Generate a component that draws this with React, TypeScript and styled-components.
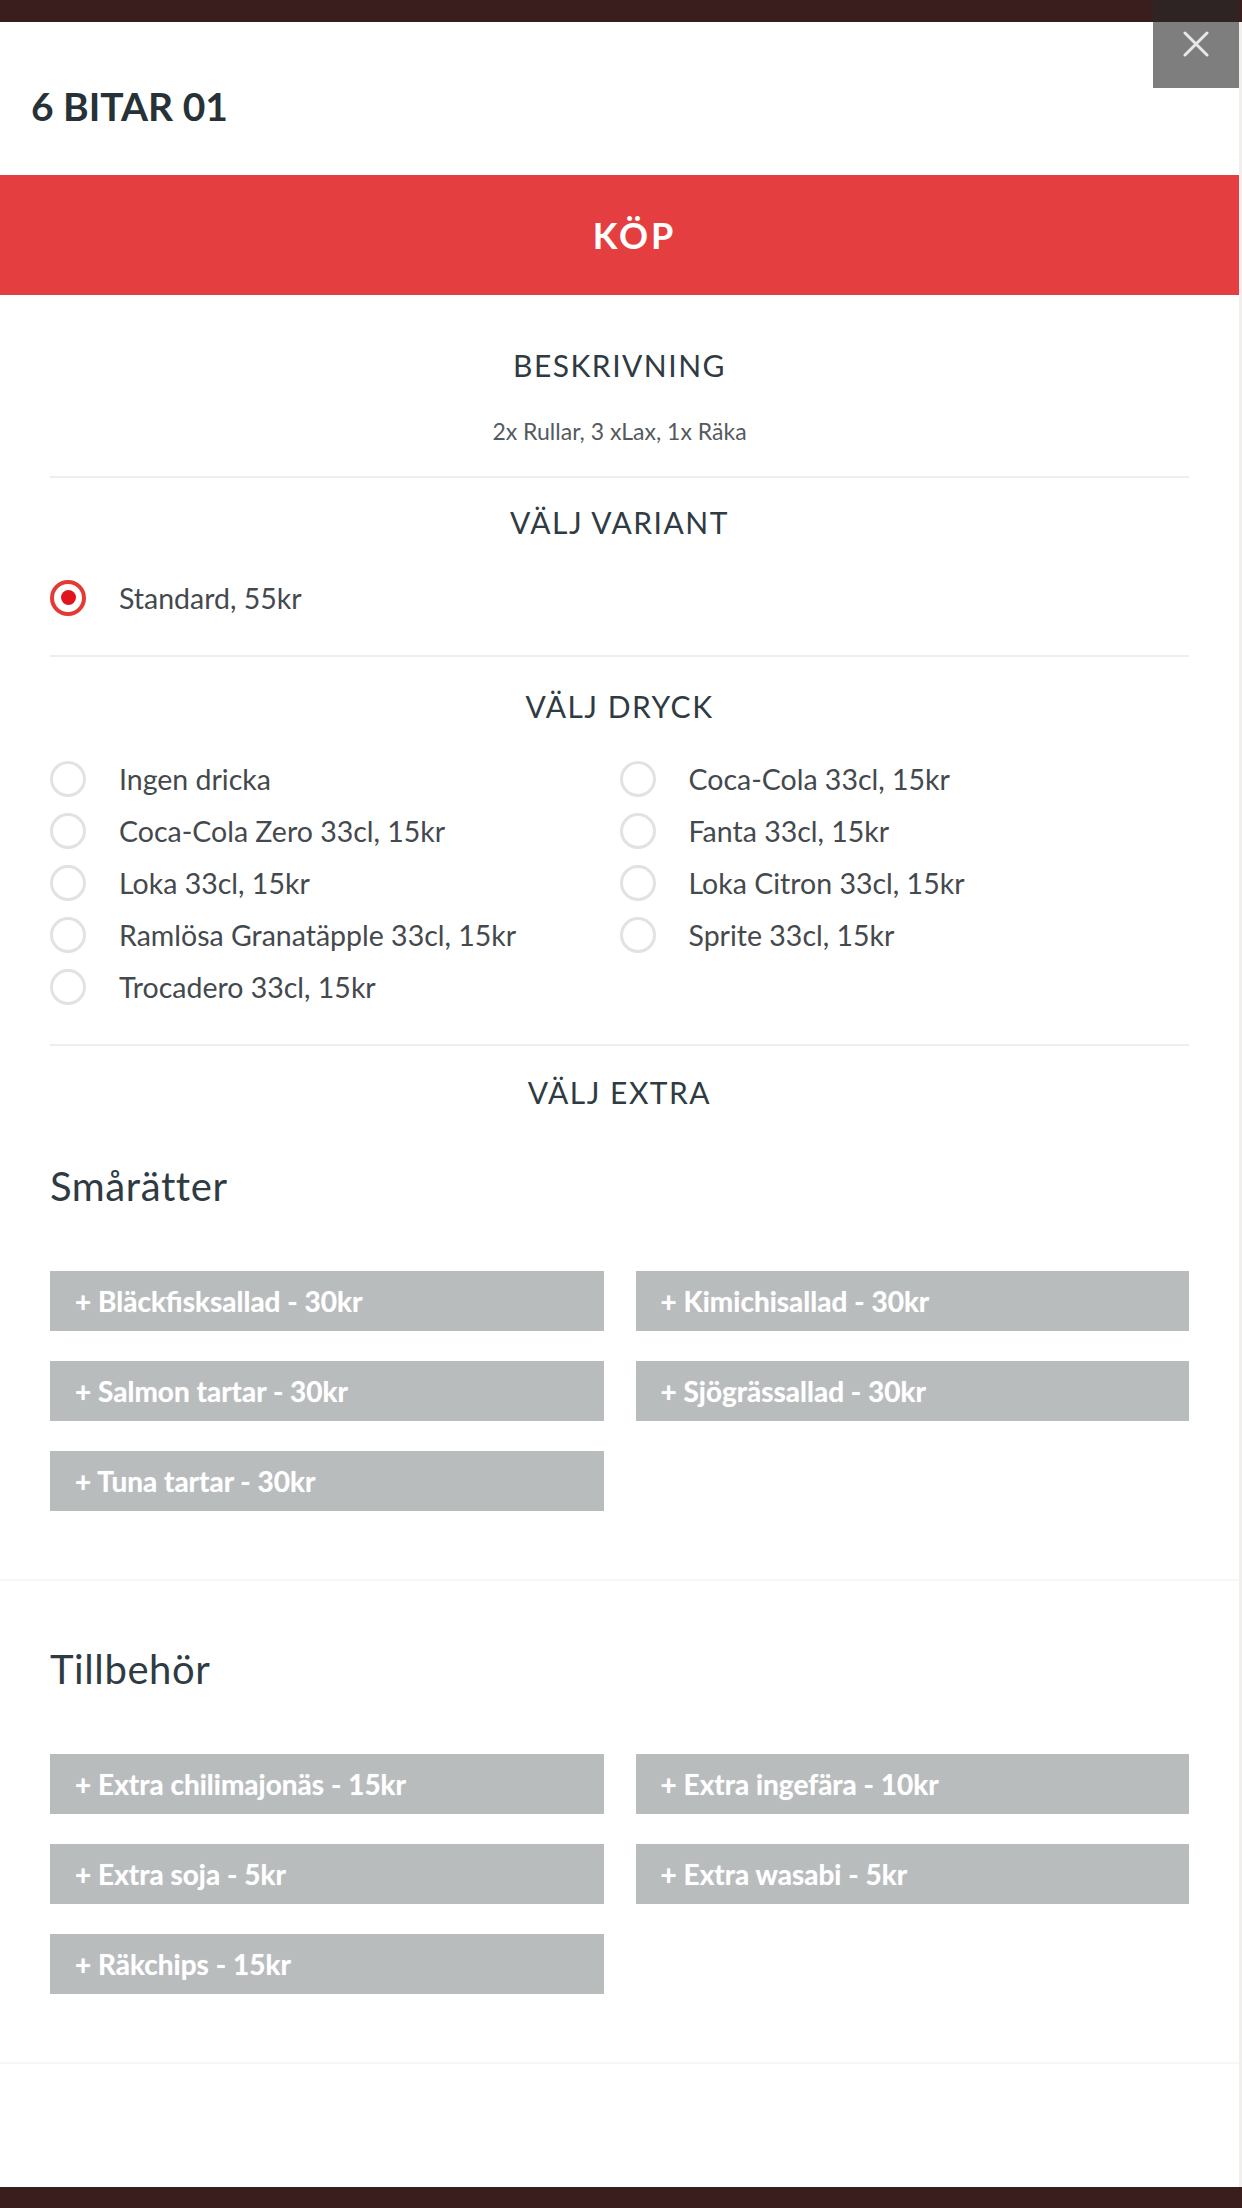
import React from "react";
import styled, { createGlobalStyle } from "styled-components";

const GlobalStyle = createGlobalStyle`
  html, body {
    margin: 0;
    padding: 0;
    background: #3a1e1e;
  }
  * { box-sizing: border-box; }
`;

const Page = styled.div`
  position: relative;
  width: 1242px;
  min-height: 2208px;
  padding: 22px 0 21px;
  background: #3a1e1e;
  font-family: Lato, "Open Sans", "Liberation Sans", sans-serif;
`;

const Modal = styled.div`
  height: 2165px;
  background: #ffffff;
  border-right: 3px solid #f3eeee;
  display: flex;
  flex-direction: column;
`;

const CloseButton = styled.button`
  position: absolute;
  top: 0;
  right: 3px;
  width: 86px;
  height: 88px;
  border: none;
  padding: 0;
  background: rgba(40, 40, 40, 0.6);
  display: flex;
  align-items: center;
  justify-content: center;
  cursor: pointer;
`;

const Header = styled.header`
  height: 153px;
  padding: 14px 31px 0;
  display: flex;
  align-items: center;
`;

const Title = styled.h1`
  margin: 0;
  font-size: 39px;
  font-weight: 700;
  color: #263238;
  line-height: 46px;
`;

const BuyButton = styled.button`
  height: 120px;
  width: 100%;
  border: none;
  padding: 0 0 0 30px;
  background: #e43e40;
  color: #ffffff;
  font-family: inherit;
  font-size: 36px;
  font-weight: 700;
  letter-spacing: 3px;
  display: flex;
  align-items: center;
  justify-content: center;
`;

const Content = styled.div`
  padding: 0 50px;
  display: flex;
  flex-direction: column;
`;

const SectionHeading = styled.h2<{ $top: number }>`
  margin: ${(p) => p.$top}px 0 0;
  font-size: 30px;
  line-height: 34px;
  font-weight: 400;
  letter-spacing: 1.5px;
  color: #2f3b42;
  text-align: center;
`;

const Description = styled.p`
  margin: 36px 0 0;
  font-size: 23px;
  line-height: 26px;
  color: #555a5e;
  text-align: center;
`;

const Divider = styled.hr<{ $top: number }>`
  margin: ${(p) => p.$top}px 0 0;
  height: 2px;
  border: none;
  background: #eeeeee;
`;

const VariantList = styled.div`
  margin-top: 41px;
`;

const DrinkGrid = styled.div`
  margin-top: 38px;
  display: grid;
  grid-template-columns: 1fr 1fr;
  row-gap: 17px;
`;

const RadioRow = styled.label`
  display: flex;
  align-items: center;
  gap: 33px;
  height: 35px;
  font-size: 28.5px;
  color: #44494d;
  white-space: nowrap;
`;

const RadioCircle = styled.span<{ $checked?: boolean }>`
  flex: none;
  width: 36px;
  height: 36px;
  border-radius: 50%;
  border: ${(p) => (p.$checked ? "4px solid #e53935" : "3px solid #e2e2e2")};
  display: flex;
  align-items: center;
  justify-content: center;
  &::after {
    content: "";
    display: ${(p) => (p.$checked ? "block" : "none")};
    width: 15px;
    height: 15px;
    border-radius: 50%;
    background: #e0141e;
  }
`;

const ExtraSection = styled.section<{ $top: number }>`
  padding: ${(p) => p.$top}px 50px 68px;
  border-bottom: 2px solid #f6f6f6;
`;

const ExtraTitle = styled.h3`
  margin: 0;
  font-size: 40px;
  line-height: 44px;
  font-weight: 400;
  letter-spacing: 0.6px;
  color: #2f3b42;
`;

const ExtraGrid = styled.div`
  margin-top: 63px;
  display: grid;
  grid-template-columns: 1fr 1fr;
  column-gap: 32px;
  row-gap: 30px;
`;

const ExtraButton = styled.button`
  height: 60px;
  border: none;
  background: #b9bcbd;
  color: #ffffff;
  font-family: inherit;
  font-size: 28px;
  font-weight: 700;
  text-align: left;
  padding: 0 25px;
  white-space: nowrap;
  text-shadow: 0 0 1px rgba(255, 255, 255, 0.6);
`;

const drinks = [
  "Ingen dricka",
  "Coca-Cola 33cl, 15kr",
  "Coca-Cola Zero 33cl, 15kr",
  "Fanta 33cl, 15kr",
  "Loka 33cl, 15kr",
  "Loka Citron 33cl, 15kr",
  "Ramlösa Granatäpple 33cl, 15kr",
  "Sprite 33cl, 15kr",
  "Trocadero 33cl, 15kr",
];

const smaratter = [
  "+ Bläckfisksallad - 30kr",
  "+ Kimichisallad - 30kr",
  "+ Salmon tartar - 30kr",
  "+ Sjögrässallad - 30kr",
  "+ Tuna tartar - 30kr",
];

const tillbehor = [
  "+ Extra chilimajonäs - 15kr",
  "+ Extra ingefära - 10kr",
  "+ Extra soja - 5kr",
  "+ Extra wasabi - 5kr",
  "+ Räkchips - 15kr",
];

export default function App() {
  return (
    <>
      <GlobalStyle />
      <Page>
        <Modal>
          <Header>
            <Title>6 BITAR 01</Title>
          </Header>
          <BuyButton>KÖP</BuyButton>
          <Content>
            <SectionHeading $top={53}>BESKRIVNING</SectionHeading>
            <Description>2x Rullar, 3 xLax, 1x Räka</Description>
            <Divider $top={32} />
            <SectionHeading $top={27}>VÄLJ VARIANT</SectionHeading>
            <VariantList>
              <RadioRow>
                <RadioCircle $checked />
                Standard, 55kr
              </RadioRow>
            </VariantList>
            <Divider $top={40} />
            <SectionHeading $top={32}>VÄLJ DRYCK</SectionHeading>
            <DrinkGrid>
              {drinks.map((d) => (
                <RadioRow key={d}>
                  <RadioCircle />
                  {d}
                </RadioRow>
              ))}
            </DrinkGrid>
            <Divider $top={40} />
            <SectionHeading $top={29}>VÄLJ EXTRA</SectionHeading>
          </Content>
          <ExtraSection $top={55}>
            <ExtraTitle>Smårätter</ExtraTitle>
            <ExtraGrid>
              {smaratter.map((s) => (
                <ExtraButton key={s}>{s}</ExtraButton>
              ))}
            </ExtraGrid>
          </ExtraSection>
          <ExtraSection $top={66}>
            <ExtraTitle>Tillbehör</ExtraTitle>
            <ExtraGrid>
              {tillbehor.map((s) => (
                <ExtraButton key={s}>{s}</ExtraButton>
              ))}
            </ExtraGrid>
          </ExtraSection>
        </Modal>
        <CloseButton aria-label="Stäng">
          <svg width="26" height="26" viewBox="0 0 26 26">
            <path d="M2 2 L24 24 M24 2 L2 24" stroke="#e8e8e8" strokeWidth="3" strokeLinecap="round" />
          </svg>
        </CloseButton>
      </Page>
    </>
  );
}
